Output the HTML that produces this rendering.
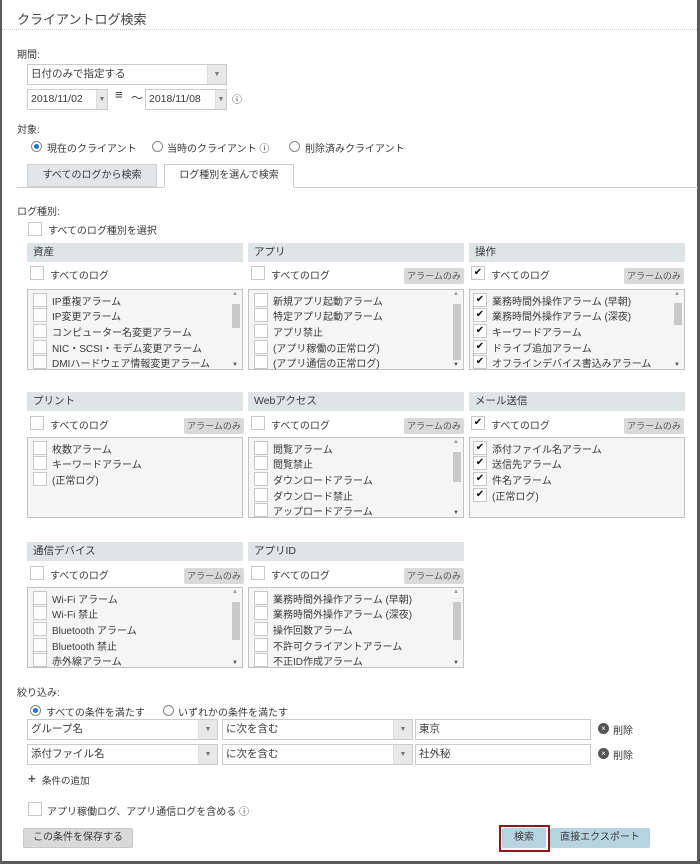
<!DOCTYPE html>
<html><head><meta charset="utf-8"><style>
*{box-sizing:border-box;margin:0;padding:0}
body{width:700px;height:864px;background:#fff;font-family:"Liberation Sans","Noto Sans CJK JP",sans-serif;font-size:10px;color:#3a3a3a;position:relative;overflow:hidden}
.frame{position:absolute;left:0;top:0;width:700px;height:864px;border:2px solid #5a5a5a;border-top:0;border-right:3px solid #5a5a5a;border-bottom:3px solid #5a5a5a}
.a{position:absolute;white-space:nowrap}
.cb{position:absolute;width:14px;height:14px;border:1px solid #c8c8c8;background:#fff;font-size:10px;line-height:12px;text-align:center;color:#111}
.hdr{position:absolute;height:19px;width:216px;background:#dfe4e7;padding-left:6px;line-height:19px;font-size:10.5px}
.btn{position:absolute;height:16px;width:60px;background:#d9d9d9;border-radius:2px;font-size:9px;color:#555;text-align:center;line-height:16px}
.list{position:absolute;width:216px;height:81px;border:1px solid #c3c3c3;background:#f5f5f5}
.list .a{top:auto}
.sb{position:absolute;right:1px;top:1px;width:11px;bottom:1px}
.sb i{position:absolute;left:2px;width:8px;top:13px;height:24px;background:#c9c9c9}
.sel{position:absolute;height:21px;border:1px solid #ccc;background:#fff;padding-left:3px;line-height:19px;font-size:10.5px}
.sel b{position:absolute;right:0;top:0;width:19px;height:19px;background:#e8e8e8;border-left:1px solid #ddd;font-size:7px;color:#777;text-align:center;line-height:19px;font-weight:normal}
.rad{position:absolute;width:11px;height:11px;border:1px solid #888;border-radius:50%;background:#fff}
.rad.on::after{content:"";position:absolute;left:2px;top:2px;width:5px;height:5px;border-radius:50%;background:#1a73e8}
</style></head><body>
<div class="frame"></div>
<div class="a" style="left:17px;top:9px;font-size:13px;color:#444">クライアントログ検索</div>
<div class="a" style="left:2px;top:29px;width:695px;border-top:1px dotted #ccc"></div>

<div class="a" style="left:17px;top:46px">期間:</div>
<div class="sel" style="left:27px;top:64px;width:200px">日付のみで指定する<b>▼</b></div>
<div class="sel" style="left:27px;top:89px;width:81px">2018/11/02<b style="width:11px">▼</b></div>
<div class="a" style="left:115px;top:87px;font-size:13px">≡</div>
<div class="a" style="left:131px;top:89px;font-size:12px">～</div>
<div class="sel" style="left:145px;top:89px;width:82px">2018/11/08<b style="width:11px">▼</b></div>
<div class="a" style="left:232px;top:91px;font-size:10px">ⓘ</div>

<div class="a" style="left:17px;top:121px">対象:</div>
<div class="rad on" style="left:31px;top:141px"></div><div class="a" style="left:47px;top:140px">現在のクライアント</div>
<div class="rad" style="left:152px;top:141px"></div><div class="a" style="left:167px;top:140px">当時のクライアント ⓘ</div>
<div class="rad" style="left:289px;top:141px"></div><div class="a" style="left:305px;top:140px">削除済みクライアント</div>

<div class="a" style="left:27px;top:164px;width:130px;height:23px;background:#e3e6e8;border:1px solid #d0d0d0;text-align:center;line-height:21px">すべてのログから検索</div>
<div class="a" style="left:164px;top:164px;width:130px;height:24px;background:#fff;border:1px solid #ccc;border-bottom:0;text-align:center;line-height:21px">ログ種別を選んで検索</div>
<div class="a" style="left:17px;top:187px;width:681px;border-top:1px solid #ccc"></div>
<div class="a" style="left:164px;top:187px;width:130px;border-top:1px solid #fff"></div>

<div class="a" style="left:17px;top:203px">ログ種別:</div>
<div class="cb" style="left:28px;top:222px"></div><div class="a" style="left:48px;top:222px">すべてのログ種別を選択</div>

<div class="hdr" style="left:27px;top:243px">資産</div>
<div class="cb" style="left:30px;top:266px"></div><div class="a" style="left:50px;top:267px">すべてのログ</div>
<div class="list" style="left:27px;top:289px">
<div class="sb"><span class="a" style="left:2px;top:0;font-size:6px;color:#999">▲</span><i></i><span class="a" style="left:2px;bottom:0;font-size:6px;color:#555">▼</span></div>
<div class="cb" style="left:5px;top:3px"></div><div class="a" style="left:24px;top:3px">IP重複アラーム</div>
<div class="cb" style="left:5px;top:18px"></div><div class="a" style="left:24px;top:18px">IP変更アラーム</div>
<div class="cb" style="left:5px;top:34px"></div><div class="a" style="left:24px;top:34px">コンピューター名変更アラーム</div>
<div class="cb" style="left:5px;top:50px"></div><div class="a" style="left:24px;top:50px">NIC・SCSI・モデム変更アラーム</div>
<div class="cb" style="left:5px;top:65px"></div><div class="a" style="left:24px;top:65px">DMIハードウェア情報変更アラーム</div>
</div>

<div class="hdr" style="left:248px;top:243px">アプリ</div>
<div class="cb" style="left:251px;top:266px"></div><div class="a" style="left:271px;top:267px">すべてのログ</div>
<div class="btn" style="left:404px;top:268px">アラームのみ</div>
<div class="list" style="left:248px;top:289px">
<div class="sb"><span class="a" style="left:2px;top:0;font-size:6px;color:#999">▲</span><i style="height:56px"></i><span class="a" style="left:2px;bottom:0;font-size:6px;color:#555">▼</span></div>
<div class="cb" style="left:5px;top:3px"></div><div class="a" style="left:24px;top:3px">新規アプリ起動アラーム</div>
<div class="cb" style="left:5px;top:18px"></div><div class="a" style="left:24px;top:18px">特定アプリ起動アラーム</div>
<div class="cb" style="left:5px;top:34px"></div><div class="a" style="left:24px;top:34px">アプリ禁止</div>
<div class="cb" style="left:5px;top:50px"></div><div class="a" style="left:24px;top:50px">(アプリ稼働の正常ログ)</div>
<div class="cb" style="left:5px;top:65px"></div><div class="a" style="left:24px;top:65px">(アプリ通信の正常ログ)</div>
</div>

<div class="hdr" style="left:469px;top:243px">操作</div>
<div class="cb" style="left:471px;top:266px">✔</div><div class="a" style="left:491px;top:267px">すべてのログ</div>
<div class="btn" style="left:624px;top:268px">アラームのみ</div>
<div class="list" style="left:469px;top:289px">
<div class="sb"><span class="a" style="left:2px;top:0;font-size:6px;color:#999">▲</span><i style="top:12px;height:22px"></i><span class="a" style="left:2px;bottom:0;font-size:6px;color:#555">▼</span></div>
<div class="cb" style="left:3px;top:3px">✔</div><div class="a" style="left:22px;top:3px">業務時間外操作アラーム (早朝)</div>
<div class="cb" style="left:3px;top:18px">✔</div><div class="a" style="left:22px;top:18px">業務時間外操作アラーム (深夜)</div>
<div class="cb" style="left:3px;top:34px">✔</div><div class="a" style="left:22px;top:34px">キーワードアラーム</div>
<div class="cb" style="left:3px;top:50px">✔</div><div class="a" style="left:22px;top:50px">ドライブ追加アラーム</div>
<div class="cb" style="left:3px;top:65px">✔</div><div class="a" style="left:22px;top:65px">オフラインデバイス書込みアラーム</div>
</div>

<div class="hdr" style="left:27px;top:392px">プリント</div>
<div class="cb" style="left:30px;top:416px"></div><div class="a" style="left:50px;top:417px">すべてのログ</div>
<div class="btn" style="left:184px;top:418px">アラームのみ</div>
<div class="list" style="left:27px;top:437px">
<div class="cb" style="left:5px;top:3px"></div><div class="a" style="left:24px;top:3px">枚数アラーム</div>
<div class="cb" style="left:5px;top:18px"></div><div class="a" style="left:24px;top:18px">キーワードアラーム</div>
<div class="cb" style="left:5px;top:34px"></div><div class="a" style="left:24px;top:34px">(正常ログ)</div>
</div>

<div class="hdr" style="left:248px;top:392px">Webアクセス</div>
<div class="cb" style="left:251px;top:416px"></div><div class="a" style="left:271px;top:417px">すべてのログ</div>
<div class="btn" style="left:404px;top:418px">アラームのみ</div>
<div class="list" style="left:248px;top:437px">
<div class="sb"><span class="a" style="left:2px;top:0;font-size:6px;color:#999">▲</span><i style="height:30px"></i><span class="a" style="left:2px;bottom:0;font-size:6px;color:#555">▼</span></div>
<div class="cb" style="left:5px;top:3px"></div><div class="a" style="left:24px;top:3px">閲覧アラーム</div>
<div class="cb" style="left:5px;top:18px"></div><div class="a" style="left:24px;top:18px">閲覧禁止</div>
<div class="cb" style="left:5px;top:34px"></div><div class="a" style="left:24px;top:34px">ダウンロードアラーム</div>
<div class="cb" style="left:5px;top:50px"></div><div class="a" style="left:24px;top:50px">ダウンロード禁止</div>
<div class="cb" style="left:5px;top:65px"></div><div class="a" style="left:24px;top:65px">アップロードアラーム</div>
</div>

<div class="hdr" style="left:469px;top:392px">メール送信</div>
<div class="cb" style="left:471px;top:416px">✔</div><div class="a" style="left:491px;top:417px">すべてのログ</div>
<div class="btn" style="left:624px;top:418px">アラームのみ</div>
<div class="list" style="left:469px;top:437px">
<div class="cb" style="left:3px;top:3px">✔</div><div class="a" style="left:22px;top:3px">添付ファイル名アラーム</div>
<div class="cb" style="left:3px;top:18px">✔</div><div class="a" style="left:22px;top:18px">送信先アラーム</div>
<div class="cb" style="left:3px;top:34px">✔</div><div class="a" style="left:22px;top:34px">件名アラーム</div>
<div class="cb" style="left:3px;top:50px">✔</div><div class="a" style="left:22px;top:50px">(正常ログ)</div>
</div>

<div class="hdr" style="left:27px;top:542px">通信デバイス</div>
<div class="cb" style="left:30px;top:566px"></div><div class="a" style="left:50px;top:567px">すべてのログ</div>
<div class="btn" style="left:184px;top:568px">アラームのみ</div>
<div class="list" style="left:27px;top:587px">
<div class="sb"><span class="a" style="left:2px;top:0;font-size:6px;color:#999">▲</span><i style="height:38px"></i><span class="a" style="left:2px;bottom:0;font-size:6px;color:#555">▼</span></div>
<div class="cb" style="left:5px;top:3px"></div><div class="a" style="left:24px;top:3px">Wi-Fi アラーム</div>
<div class="cb" style="left:5px;top:18px"></div><div class="a" style="left:24px;top:18px">Wi-Fi 禁止</div>
<div class="cb" style="left:5px;top:34px"></div><div class="a" style="left:24px;top:34px">Bluetooth アラーム</div>
<div class="cb" style="left:5px;top:50px"></div><div class="a" style="left:24px;top:50px">Bluetooth 禁止</div>
<div class="cb" style="left:5px;top:65px"></div><div class="a" style="left:24px;top:65px">赤外線アラーム</div>
</div>

<div class="hdr" style="left:248px;top:542px">アプリID</div>
<div class="cb" style="left:251px;top:566px"></div><div class="a" style="left:271px;top:567px">すべてのログ</div>
<div class="btn" style="left:404px;top:568px">アラームのみ</div>
<div class="list" style="left:248px;top:587px">
<div class="sb"><span class="a" style="left:2px;top:0;font-size:6px;color:#999">▲</span><i style="height:38px"></i><span class="a" style="left:2px;bottom:0;font-size:6px;color:#555">▼</span></div>
<div class="cb" style="left:5px;top:3px"></div><div class="a" style="left:24px;top:3px">業務時間外操作アラーム (早朝)</div>
<div class="cb" style="left:5px;top:18px"></div><div class="a" style="left:24px;top:18px">業務時間外操作アラーム (深夜)</div>
<div class="cb" style="left:5px;top:34px"></div><div class="a" style="left:24px;top:34px">操作回数アラーム</div>
<div class="cb" style="left:5px;top:50px"></div><div class="a" style="left:24px;top:50px">不許可クライアントアラーム</div>
<div class="cb" style="left:5px;top:65px"></div><div class="a" style="left:24px;top:65px">不正ID作成アラーム</div>
</div>

<div class="a" style="left:17px;top:684px">絞り込み:</div>
<div class="rad on" style="left:30px;top:705px"></div><div class="a" style="left:46px;top:704px">すべての条件を満たす</div>
<div class="rad" style="left:163px;top:705px"></div><div class="a" style="left:178px;top:704px">いずれかの条件を満たす</div>

<div class="sel" style="left:27px;top:719px;width:191px">グループ名<b>▼</b></div>
<div class="sel" style="left:222px;top:719px;width:191px">に次を含む<b>▼</b></div>
<div class="sel" style="left:415px;top:719px;width:176px">東京</div>
<div class="a" style="left:598px;top:723px;width:11px;height:11px;border-radius:50%;background:#555;color:#fff;font-size:8px;text-align:center;line-height:11px">×</div>
<div class="a" style="left:613px;top:722px;font-size:10px">削除</div>

<div class="sel" style="left:27px;top:744px;width:191px">添付ファイル名<b>▼</b></div>
<div class="sel" style="left:222px;top:744px;width:191px">に次を含む<b>▼</b></div>
<div class="sel" style="left:415px;top:744px;width:176px">社外秘</div>
<div class="a" style="left:598px;top:748px;width:11px;height:11px;border-radius:50%;background:#555;color:#fff;font-size:8px;text-align:center;line-height:11px">×</div>
<div class="a" style="left:613px;top:747px;font-size:10px">削除</div>

<div class="a" style="left:28px;top:771px;font-size:13px;font-weight:bold;color:#555">+</div>
<div class="a" style="left:42px;top:773px;font-size:9.5px">条件の追加</div>

<div class="cb" style="left:28px;top:802px"></div><div class="a" style="left:47px;top:803px">アプリ稼働ログ、アプリ通信ログを含める ⓘ</div>

<div class="a" style="left:23px;top:828px;width:110px;height:20px;background:#d9d9d9;border:1px solid #c8c8c8;border-radius:2px;text-align:center;line-height:18px">この条件を保存する</div>
<div class="a" style="left:499px;top:825px;width:51px;height:27px;border:2px solid #8b1a1a"></div>
<div class="a" style="left:502px;top:828px;width:44px;height:20px;background:#b7d3e0;border-radius:2px;text-align:center;line-height:20px">検索</div>
<div class="a" style="left:550px;top:828px;width:100px;height:20px;background:#b7d3e0;border-radius:2px;text-align:center;line-height:20px">直接エクスポート</div>
</body></html>
